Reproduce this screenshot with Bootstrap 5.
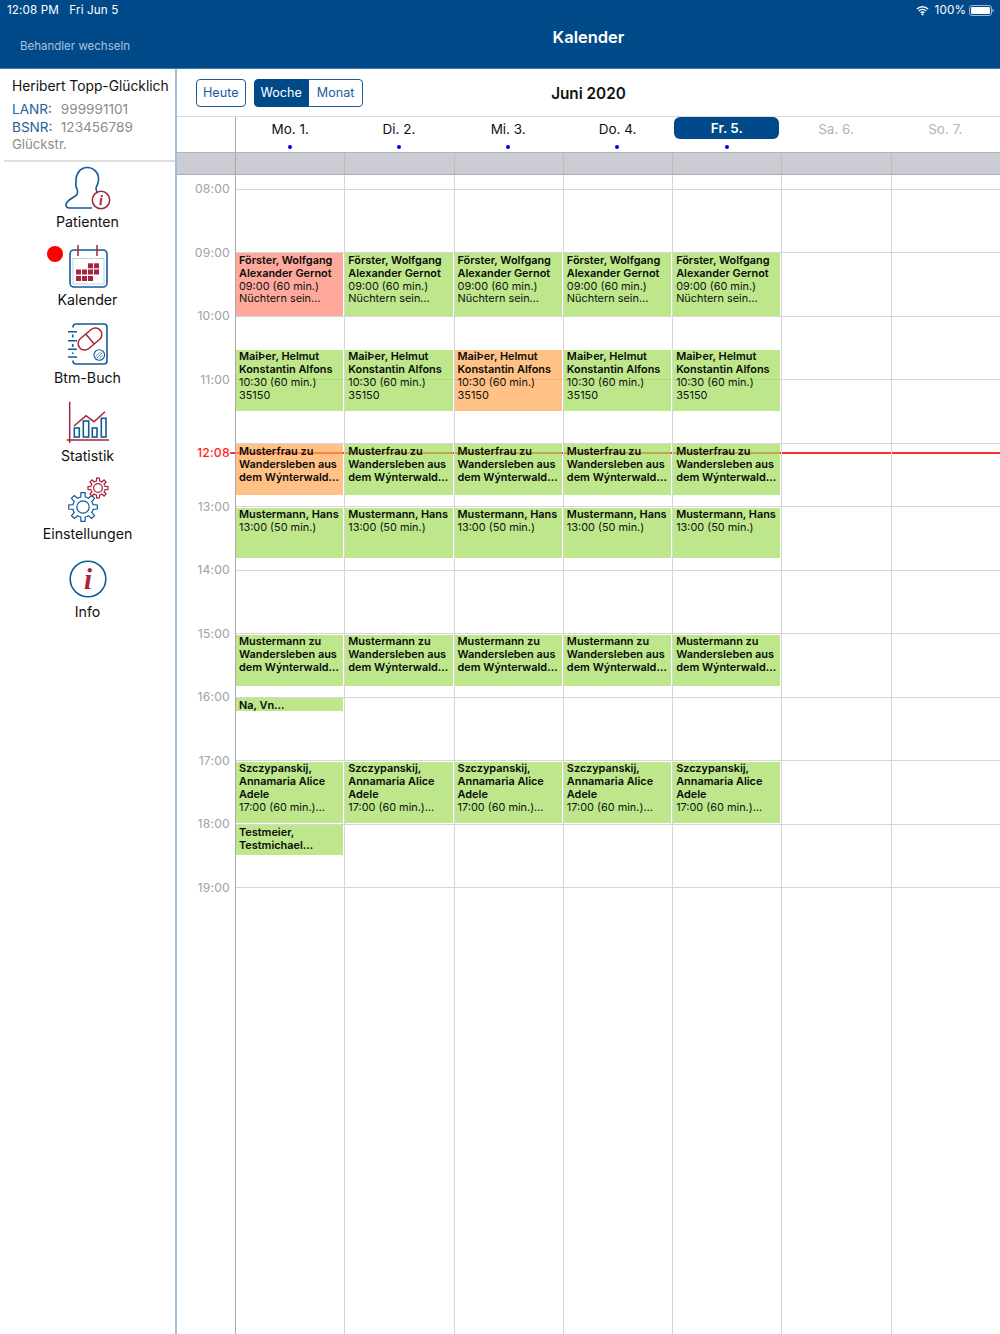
<!DOCTYPE html>
<html lang="de">
<head>
<meta charset="utf-8">
<title>Kalender</title>
<link href="https://cdn.jsdelivr.net/npm/bootstrap@5.3.0/dist/css/bootstrap.min.css" rel="stylesheet">
<style>
html,body{height:1334px;overflow:hidden;background:#fff}
body{font-family:Inter,Roboto,"Liberation Sans",sans-serif;color:#111}
.topbar{height:69px;background:#014a89;border-bottom:1px solid #3d78ad;color:#fff;flex:none}
.statusline{height:20px;font-size:11.7px;padding:0 6px 0 7px;line-height:20px;letter-spacing:.1px}
.statusline .dt{margin-left:7px}
.statusright{gap:6px}
.statusright svg:last-child{margin-left:-3px}
.titlegrid{display:grid;grid-template-columns:176px 1fr}
.switcher{font-size:11.5px;color:#a7c3de;padding:16px 0 0 20px;line-height:20px}
.apptitle{font-size:16.5px;font-weight:600;text-align:center;line-height:20px;margin-top:7px;padding-left:1px}
.sidebar{width:177px;flex:none;border-right:2px solid #9dbfdc}
.who{height:93px;padding:7px 0 0 8px;margin-left:4px;border-bottom:2px solid #dfdfe2;font-size:13.6px;line-height:17.5px;color:#8c8c8c}
.who .person{font-size:13.8px;color:#111;line-height:20px;margin-bottom:5px;white-space:nowrap}
.who b{font-weight:400;color:#2a6299;display:inline-block;width:45px}
.who .addr{font-size:13.2px}
.menulist{padding-top:3px}
.menuitem{height:78px;position:relative;font-size:14.2px;line-height:20px;color:#111;text-align:center}
.menuitem svg{display:block;margin:0 auto 1px;width:60px;height:46px}
.reddot{position:absolute;left:47px;top:3px;width:16px;height:16px;border-radius:50%;background:#fe0000}
.ib{fill:none;stroke:#155a97;stroke-width:1.6}
.ir{fill:none;stroke:#a8233c;stroke-width:1.5}
.icell{fill:#a8233c}
.itxt{fill:#a8233c;font-family:"Liberation Serif",serif;font-style:italic;font-weight:700}
.toolbar{height:48px;display:grid;grid-template-columns:1fr auto 1fr;align-items:center;border-bottom:1px solid #dcdcdc;flex:none}
.toolleft{padding-left:19px}
.toolbar .btn{--bs-btn-padding-x:6px;--bs-btn-padding-y:0;--bs-btn-font-size:12.6px;--bs-btn-line-height:26px;--bs-btn-color:#1a5d9c;--bs-btn-border-color:#1a5d9c;--bs-btn-active-bg:#014a89;--bs-btn-active-border-color:#014a89;--bs-btn-border-radius:4px;--bs-btn-hover-color:#1a5d9c;--bs-btn-hover-bg:transparent;--bs-btn-hover-border-color:#1a5d9c}
.toolbar .btn.monthbtn{--bs-btn-padding-x:8px}
.toolbar .btn-group{margin-left:8px}
.monthtitle{font-size:15.3px;font-weight:600;margin:3px 0 0;color:#111}
.weekgrid{display:grid;grid-template-columns:58px repeat(7,1fr)}
.dayhead{height:35px;flex:none}
.dayhead>div{position:relative;text-align:center;font-size:13.5px;line-height:24px;height:35px}
.dayhead>div:nth-child(2){border-left:1px solid #a9a9a9}
.dayhead>div.off{color:#b4b4b4}
.pill{display:block;background:#014a89;color:#fff;font-weight:600;border-radius:6px;margin:0 2px;height:22px;line-height:23px}
.pin{position:absolute;left:50%;bottom:3px;width:4px;height:4px;margin-left:-2px;border-radius:50%;background:#0000f0}
.band{height:23px;background:#cbccd4;border-top:1px solid #b4b4b9;border-bottom:1px solid #aeaeb3;flex:none}
.band>div{border-left:1px solid #bdbdc2}
.band>div:first-child{border:0}
.band>div:nth-child(2){border-left-color:#a9a9a9}
.canvas{position:relative;flex:1 1 auto;overflow:hidden}
.hours{position:absolute;inset:0;padding-top:13.6px}
.hourrow{height:63.5px;position:relative;margin-left:58px;border-top:1px solid #d6d6d8}
.hourrow span{position:absolute;right:100%;margin-right:5px;top:-8.6px;font-size:12.2px;line-height:16px;color:#a2a2a2;letter-spacing:.2px}
.columns{position:absolute;inset:0}
.daycol{position:relative;border-left:1.5px solid #d6d6d8;height:100%}
.daycol.first{border-left:1px solid #a9a9a9}
.nowline{position:absolute;left:53px;right:0;top:277px;height:1.5px;background:#ff2f2f}
.nowlabel{position:absolute;left:20px;top:269.500px;font-size:12.2px;line-height:16px;color:#ff1c1c;letter-spacing:.2px;font-weight:500}
.ev{position:absolute;left:0;right:1px;padding:.6px 0 0 3px;font-size:10.9px;line-height:12.95px;background:rgba(161,221,88,.7);overflow:hidden;white-space:nowrap;color:#111}
.ev b{font-weight:600;color:#0a0a0a}
.ev.crit{background:rgba(255,132,115,.7)}
.ev.warn{background:rgba(255,166,81,.7)}
.a{top:78px;height:63px}
.m{top:174.5px;height:61.5px}
.f{top:269.3px;height:50.7px}
.h{top:332.7px;height:50.6px}
.z{top:459.5px;height:51px}
.n{top:523px;height:12.7px}
.s{top:586.7px;height:61.6px}
.t{top:650px;height:30px}
</style>
</head>
<body class="d-flex flex-column">
<header class="topbar">
  <div class="statusline d-flex justify-content-between">
    <div>12:08 PM <span class="dt">Fri Jun 5</span></div>
    <div class="statusright d-flex align-items-center">
      <svg width="13" height="11" viewBox="0 0 14 11" aria-hidden="true"><path d="M1 4a8.5 8.5 0 0 1 12 0M3 6a5.600 5.600 0 0 1 8 0M5 8a2.800 2.800 0 0 1 4 0" fill="none" stroke="#fff" stroke-width="1.500"/><circle cx="7" cy="9.600" r="1.200" fill="#fff"/></svg>
      <span>100%</span>
      <svg width="25" height="11" viewBox="0 0 25 11" aria-hidden="true"><rect x=".5" y=".5" width="22" height="10" rx="2.500" fill="none" stroke="#9fbcd6"/><rect x="2" y="2" width="19" height="7" rx="1.200" fill="#fff"/><rect x="23.300" y="4" width="1.400" height="3" rx=".7" fill="#9fbcd6"/></svg>
    </div>
  </div>
  <div class="titlegrid">
    <div class="switcher">Behandler wechseln</div>
    <div class="apptitle">Kalender</div>
  </div>
</header>
<div class="d-flex flex-grow-1" style="min-height:0">
  <aside class="sidebar">
    <div class="who">
      <div class="person">Heribert Topp-Glücklich</div>
      <div><b>LANR:</b> 999991101</div>
      <div><b>BSNR:</b> 123456789</div>
      <div class="addr">Glückstr.</div>
    </div>
    <div class="menulist">
    <div class="menuitem">
      <svg viewBox="0 0 60 46" aria-hidden="true"><path class="ib" d="M34 43H12C8.500 43 7 40.500 8.500 38C11 34 17 32 19 29.500C20 27 19.500 25 19 24C17.500 22 17.500 20 18 17C17.500 8 23 2.500 29 2.500C36 2.500 41 8 40.500 15C40.500 18 39 21 38 23C38 26 38.500 27 40 28"/><circle class="ir" cx="43" cy="35" r="8.700" fill="#fff"/><text class="itxt" x="43" y="40" font-size="14" text-anchor="middle">i</text></svg>
      Patienten
    </div>
    <div class="menuitem">
      <span class="reddot"></span>
      <svg viewBox="0 0 60 46" aria-hidden="true"><rect class="ib" x="12" y="7" width="37" height="37" rx="4"/><rect x="15" y="15.500" width="31" height="25.500" fill="none" stroke="#a9c6df" stroke-width=".8"/><path class="ir" stroke-width="2.200" d="M20 2v11M39 2v11"/><g class="icell"><rect x="30" y="20.300" width="5" height="5"/><rect x="36" y="20.300" width="5" height="5"/><rect x="18" y="26.500" width="5" height="5"/><rect x="24" y="26.500" width="5" height="5"/><rect x="30" y="26.500" width="5" height="5"/><rect x="36" y="26.500" width="5" height="5"/><rect x="18" y="33" width="5" height="5"/><rect x="24" y="33" width="5" height="5"/><rect x="30" y="33" width="5" height="5"/></g></svg>
      Kalender
    </div>
    <div class="menuitem">
      <svg viewBox="0 0 60 46" aria-hidden="true"><path class="ib" d="M15 6.500V6A3 3 0 0 1 18 3H46A3 3 0 0 1 49 6V40A3 3 0 0 1 46 43H18A3 3 0 0 1 15 40V39.500M14.700 13.500v3M14.700 23v3M14.700 31.500v1.500"/><path class="ib" d="M10 10.700h9M10 19.700h9M10 28.300h9M10 36h9"/><g transform="rotate(-40 32 18)"><rect class="ir" x="18.500" y="11.500" width="27" height="13" rx="6.500"/><path class="ir" d="M32 11.500v13"/></g><circle cx="41.300" cy="34" r="5.300" fill="none" stroke="#155a97" stroke-width="1.100"/><path d="M37.800 35.500l5-5M39 37l5-5M41 37.800l3.800-3.800" stroke="#5a90bf" stroke-width="1"/></svg>
      Btm-Buch
    </div>
    <div class="menuitem">
      <svg viewBox="0 0 60 46" aria-hidden="true"><path class="ir" d="M11.700 2.700V44M8.700 41H51M16 27L28 16.700L36 22.700L47 12.700"/><g class="ib"><rect x="16.300" y="29" width="5" height="9"/><rect x="25.300" y="22" width="5.400" height="16"/><rect x="34.300" y="29" width="4.700" height="9"/><rect x="43.300" y="19.300" width="4.700" height="18.700"/></g></svg>
      Statistik
    </div>
    <div class="menuitem">
      <svg viewBox="0 0 60 46" aria-hidden="true"><defs><path id="gt" d="M-3.830-9.240L-2.250-9.740L-1.950-13.860L1.950-13.860L2.250-9.740L3.830-9.240"/><g id="gear"><use href="#gt"/><use href="#gt" transform="rotate(45)"/><use href="#gt" transform="rotate(90)"/><use href="#gt" transform="rotate(135)"/><use href="#gt" transform="rotate(180)"/><use href="#gt" transform="rotate(225)"/><use href="#gt" transform="rotate(270)"/><use href="#gt" transform="rotate(315)"/><circle r="6"/></g></defs><g transform="translate(25 30) scale(1.03)" fill="none" stroke="#155a97" stroke-width="1.200"><use href="#gear"/></g><g transform="translate(40 11) scale(.72)" fill="none" stroke="#a8233c" stroke-width="1.700"><use href="#gear"/></g></svg>
      Einstellungen
    </div>
    <div class="menuitem">
      <svg viewBox="0 0 60 46" aria-hidden="true"><circle cx="30" cy="24" r="17.800" fill="none" stroke="#155a97" stroke-width="1.600"/><text class="itxt" x="30" y="34" font-size="29" text-anchor="middle">i</text></svg>
      Info
    </div>
    </div>
  </aside>
  <main class="d-flex flex-column flex-grow-1" style="min-width:0">
    <div class="toolbar">
      <div class="toolleft d-flex">
        <button type="button" class="btn btn-outline-primary">Heute</button>
        <div class="btn-group" role="group">
          <button type="button" class="btn btn-outline-primary active">Woche</button>
          <button type="button" class="btn btn-outline-primary monthbtn">Monat</button>
        </div>
      </div>
      <h1 class="monthtitle">Juni 2020</h1>
      <div></div>
    </div>
    <div class="weekgrid dayhead">
      <div></div>
      <div>Mo. 1.<span class="pin"></span></div>
      <div>Di. 2.<span class="pin"></span></div>
      <div>Mi. 3.<span class="pin"></span></div>
      <div>Do. 4.<span class="pin"></span></div>
      <div><span class="pill">Fr. 5.</span><span class="pin"></span></div>
      <div class="off">Sa. 6.</div>
      <div class="off">So. 7.</div>
    </div>
    <div class="weekgrid band"><div></div><div></div><div></div><div></div><div></div><div></div><div></div><div></div></div>
    <div class="canvas">
      <div class="hours">
        <div class="hourrow"><span>08:00</span></div>
        <div class="hourrow"><span>09:00</span></div>
        <div class="hourrow"><span>10:00</span></div>
        <div class="hourrow"><span>11:00</span></div>
        <div class="hourrow"></div>
        <div class="hourrow"><span>13:00</span></div>
        <div class="hourrow"><span>14:00</span></div>
        <div class="hourrow"><span>15:00</span></div>
        <div class="hourrow"><span>16:00</span></div>
        <div class="hourrow"><span>17:00</span></div>
        <div class="hourrow"><span>18:00</span></div>
        <div class="hourrow"><span>19:00</span></div>
      </div>
      <div class="nowline"></div>
      <div class="nowlabel">12:08</div>
      <div class="weekgrid columns">
        <div></div>
        <div class="daycol first">
          <div class="ev crit a"><b>Förster, Wolfgang<br>Alexander Gernot</b><br>09:00 (60 min.)<br>Nüchtern sein…</div>
          <div class="ev m"><b>MaiÞer, Helmut<br>Konstantin Alfons</b><br>10:30 (60 min.)<br>35150</div>
          <div class="ev warn f"><b>Musterfrau zu<br>Wandersleben aus<br>dem Wýnterwald…</b></div>
          <div class="ev h"><b>Mustermann, Hans</b><br>13:00 (50 min.)</div>
          <div class="ev z"><b>Mustermann zu<br>Wandersleben aus<br>dem Wýnterwald…</b></div>
          <div class="ev n"><b>Na, Vn…</b></div>
          <div class="ev s"><b>Szczypanskij,<br>Annamaria Alice<br>Adele</b><br>17:00 (60 min.)…</div>
          <div class="ev t"><b>Testmeier,<br>Testmichael…</b></div>
        </div>
        <div class="daycol">
          <div class="ev a"><b>Förster, Wolfgang<br>Alexander Gernot</b><br>09:00 (60 min.)<br>Nüchtern sein…</div>
          <div class="ev m"><b>MaiÞer, Helmut<br>Konstantin Alfons</b><br>10:30 (60 min.)<br>35150</div>
          <div class="ev f"><b>Musterfrau zu<br>Wandersleben aus<br>dem Wýnterwald…</b></div>
          <div class="ev h"><b>Mustermann, Hans</b><br>13:00 (50 min.)</div>
          <div class="ev z"><b>Mustermann zu<br>Wandersleben aus<br>dem Wýnterwald…</b></div>
          <div class="ev s"><b>Szczypanskij,<br>Annamaria Alice<br>Adele</b><br>17:00 (60 min.)…</div>
        </div>
        <div class="daycol">
          <div class="ev a"><b>Förster, Wolfgang<br>Alexander Gernot</b><br>09:00 (60 min.)<br>Nüchtern sein…</div>
          <div class="ev warn m"><b>MaiÞer, Helmut<br>Konstantin Alfons</b><br>10:30 (60 min.)<br>35150</div>
          <div class="ev f"><b>Musterfrau zu<br>Wandersleben aus<br>dem Wýnterwald…</b></div>
          <div class="ev h"><b>Mustermann, Hans</b><br>13:00 (50 min.)</div>
          <div class="ev z"><b>Mustermann zu<br>Wandersleben aus<br>dem Wýnterwald…</b></div>
          <div class="ev s"><b>Szczypanskij,<br>Annamaria Alice<br>Adele</b><br>17:00 (60 min.)…</div>
        </div>
        <div class="daycol">
          <div class="ev a"><b>Förster, Wolfgang<br>Alexander Gernot</b><br>09:00 (60 min.)<br>Nüchtern sein…</div>
          <div class="ev m"><b>MaiÞer, Helmut<br>Konstantin Alfons</b><br>10:30 (60 min.)<br>35150</div>
          <div class="ev f"><b>Musterfrau zu<br>Wandersleben aus<br>dem Wýnterwald…</b></div>
          <div class="ev h"><b>Mustermann, Hans</b><br>13:00 (50 min.)</div>
          <div class="ev z"><b>Mustermann zu<br>Wandersleben aus<br>dem Wýnterwald…</b></div>
          <div class="ev s"><b>Szczypanskij,<br>Annamaria Alice<br>Adele</b><br>17:00 (60 min.)…</div>
        </div>
        <div class="daycol">
          <div class="ev a"><b>Förster, Wolfgang<br>Alexander Gernot</b><br>09:00 (60 min.)<br>Nüchtern sein…</div>
          <div class="ev m"><b>MaiÞer, Helmut<br>Konstantin Alfons</b><br>10:30 (60 min.)<br>35150</div>
          <div class="ev f"><b>Musterfrau zu<br>Wandersleben aus<br>dem Wýnterwald…</b></div>
          <div class="ev h"><b>Mustermann, Hans</b><br>13:00 (50 min.)</div>
          <div class="ev z"><b>Mustermann zu<br>Wandersleben aus<br>dem Wýnterwald…</b></div>
          <div class="ev s"><b>Szczypanskij,<br>Annamaria Alice<br>Adele</b><br>17:00 (60 min.)…</div>
        </div>
        <div class="daycol"></div>
        <div class="daycol"></div>
      </div>
    </div>
  </main>
</div>
<script src="https://cdn.jsdelivr.net/npm/bootstrap@5.3.0/dist/js/bootstrap.bundle.min.js"></script>
</body>
</html>
